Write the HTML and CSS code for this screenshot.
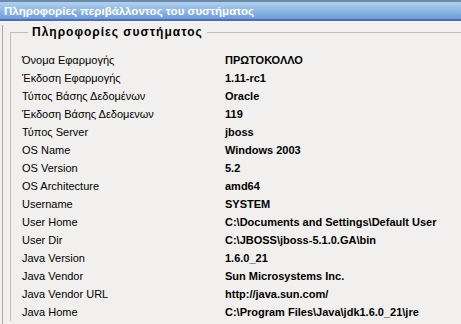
FILE: index.html
```html
<!DOCTYPE html>
<html lang="el">
<head>
    <meta charset="UTF-8">
    <title>Πληροφορίες περιβάλλοντος του συστήματος</title>
    <link rel="stylesheet" href="styles.css">
</head>
<body>
    <div class="titlebar">Πληροφορίες περιβάλλοντος του συστήματος</div>
    <div class="panel">
        <fieldset class="group">
            <legend>Πληροφορίες συστήματος</legend>
            <table class="props">
                <tr><td>Όνομα Εφαρμογής</td><td>ΠΡΩΤΟΚΟΛΛΟ</td></tr>
                <tr><td>Έκδοση Εφαρμογής</td><td>1.11-rc1</td></tr>
                <tr><td>Τύπος Βάσης Δεδομένων</td><td>Oracle</td></tr>
                <tr><td>Έκδοση Βάσης Δεδομενων</td><td>119</td></tr>
                <tr><td>Τύπος Server</td><td>jboss</td></tr>
                <tr><td>OS Name</td><td>Windows 2003</td></tr>
                <tr><td>OS Version</td><td>5.2</td></tr>
                <tr><td>OS Architecture</td><td>amd64</td></tr>
                <tr><td>Username</td><td>SYSTEM</td></tr>
                <tr><td>User Home</td><td>C:\Documents and Settings\Default User</td></tr>
                <tr><td>User Dir</td><td>C:\JBOSS\jboss-5.1.0.GA\bin</td></tr>
                <tr><td>Java Version</td><td>1.6.0_21</td></tr>
                <tr><td>Java Vendor</td><td>Sun Microsystems Inc.</td></tr>
                <tr><td>Java Vendor URL</td><td>http://java.sun.com/</td></tr>
                <tr><td>Java Home</td><td>C:\Program Files\Java\jdk1.6.0_21\jre</td></tr>
            </table>
        </fieldset>
    </div>
</body>
</html>
```

FILE: styles.css
```css
body {
    margin: 0;
    background-color: #f1f0ee;
    font-family: "Liberation Sans", Arial, sans-serif;
    font-size: 11px;
    color: black;
    overflow: hidden;
}
.titlebar {
    height: 17px;
    line-height: 18px;
    padding-left: 4px;
    border-top: 2px solid #6f8aa6;
    border-bottom: 2px solid #4e6cb6;
    background: linear-gradient(#b0d0f0, #8fb8e4 50%, #6d9cd6);
    color: white;
    font-weight: bold;
    font-size: 11.5px;
    white-space: nowrap;
}
.panel {
    margin-left: 2px;
    border-left: 1px solid #a8a8a8;
    height: 400px;
}
.group {
    margin: 4px 0 0 7px;
    padding: 12px 0 0 11px;
    width: 600px;
    border: none;
    border-top: 1px solid #bcbcbc;
    border-left: 1px solid #bcbcbc;
}
.group legend {
    padding: 0 4px;
    margin-left: 6px;
    font-weight: bold;
    font-size: 12px;
    letter-spacing: 1px;
}
.props {
    border-collapse: collapse;
}
.props td {
    height: 18px;
    padding: 0;
    white-space: nowrap;
}
.props td:first-child {
    width: 203px;
}
.props td:last-child {
    font-weight: bold;
}
```
